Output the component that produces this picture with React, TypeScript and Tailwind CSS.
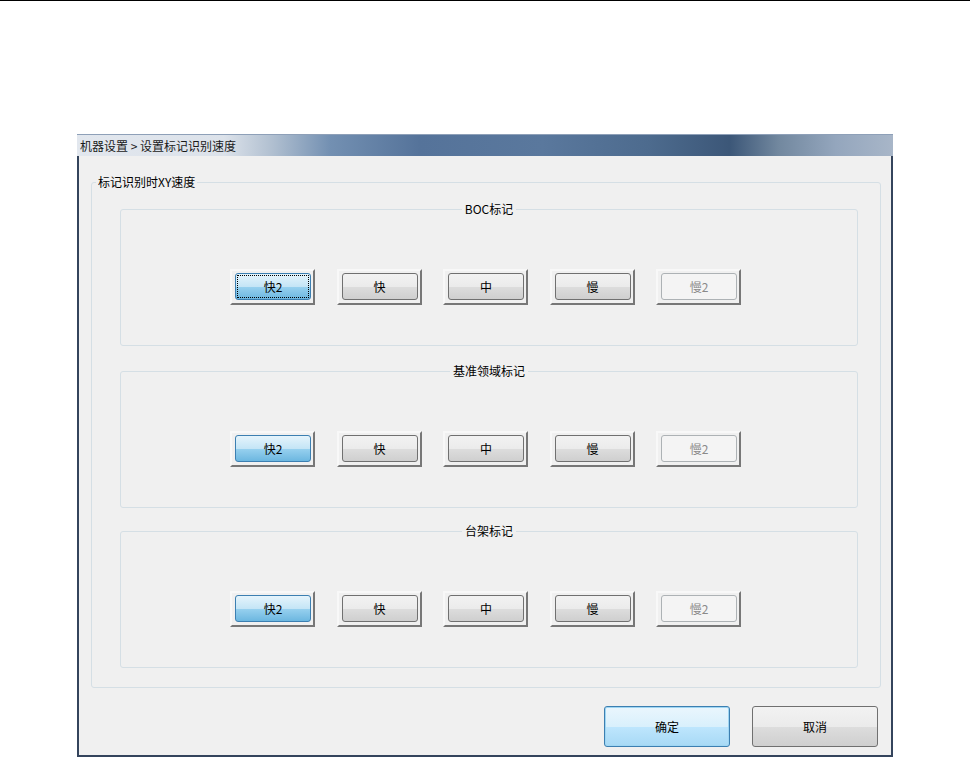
type Kind = "selected" | "focused" | "normal" | "disabled";

const rows: { title: string; focusFirst: boolean; mt: string }[] = [
  { title: "BOC标记", focusFirst: true, mt: "mt-0" },
  { title: "基准领域标记", focusFirst: false, mt: "mt-[18px]" },
  { title: "台架标记", focusFirst: false, mt: "mt-[16px]" },
];

function SpeedButton({ label, kind }: { label: string; kind: Kind }) {
  const face =
    kind === "selected" || kind === "focused"
      ? "border-[#3c7fb1] bg-[linear-gradient(180deg,#e5f4fc_0%,#c4e5f6_50%,#98d1ef_51%,#6cb7e0_100%)] text-black"
      : kind === "disabled"
        ? "border-[#adb2b5] bg-[#f4f4f4] text-[#8a8a8a]"
        : "border-[#707070] bg-[linear-gradient(180deg,#f2f2f2_0%,#ebebeb_50%,#dddddd_51%,#cfcfcf_100%)] text-black";

  return (
    <div className="w-[85px] h-[36px] border-2 border-t-[#f8f8f8] border-l-[#f8f8f8] border-r-[#777777] border-b-[#777777] bg-[#f0f0f0] pl-[3px] pt-[2px] pr-[2px] pb-[3px]">
      <div className={`relative w-full h-full rounded-[3px] border flex items-center justify-center text-[12px] ${face}`}>
        {kind === "focused" && (
          <div className="absolute inset-[1px] border border-dotted border-black" />
        )}
        <span className="relative">{label}</span>
      </div>
    </div>
  );
}

function SpeedGroup({ title, focusFirst, mt }: { title: string; focusFirst: boolean; mt: string }) {
  const items: { label: string; kind: Kind }[] = [
    { label: "快2", kind: focusFirst ? "focused" : "selected" },
    { label: "快", kind: "normal" },
    { label: "中", kind: "normal" },
    { label: "慢", kind: "normal" },
    { label: "慢2", kind: "disabled" },
  ];
  return (
    <fieldset className={`${mt} w-[738px] h-[144px] border border-[#d5dfe5] rounded-[3px]`}>
      <legend className="mx-auto px-[3px] text-[12px] leading-[14px]">{title}</legend>
      <div className="flex gap-[21.5px] pl-[109px] pt-[53px]">
        {items.map((b) => (
          <SpeedButton key={b.label} label={b.label} kind={b.kind} />
        ))}
      </div>
    </fieldset>
  );
}

export default function App() {
  return (
    <div className="w-[970px] h-[758px] bg-white overflow-hidden font-['Noto_Sans_CJK_SC','Noto_Sans',sans-serif] text-black">
      <div className="h-[1px] bg-black" />

      <div className="ml-[77px] mt-[133px] w-[816px]">
        <div className="h-[22px] flex items-center pl-[3px] text-[12px] text-[#1a1a1a] bg-[linear-gradient(90deg,#e2e7ee_0%,#dce2ea_18%,#b0bfd0_24%,#7390b2_31%,#55739a_42%,#5a789d_57%,#4d6b8e_70%,#3c5778_80%,#72889f_86%,#94a6bd_93%,#a8b6c8_100%)] border-t border-[#8ea0b8]">
          机器设置 &gt; 设置标记识别速度
        </div>

        <div className="h-[601px] border-2 border-t-0 border-[#34445c] bg-[#f0f0f0] flex flex-col">
          <fieldset className="mt-[19px] ml-[12px] w-[790px] border border-[#d5dfe5] rounded-[3px]">
            <legend className="ml-[4px] px-[2px] text-[12px] leading-[14px]">标记识别时XY速度</legend>
            <div className="pl-[28px] pt-[13px] pb-[19px]">
              {rows.map((r) => (
                <SpeedGroup key={r.title} title={r.title} focusFirst={r.focusFirst} mt={r.mt} />
              ))}
            </div>
          </fieldset>

          <div className="flex justify-end gap-[22px] pr-[13px] mt-[18px]">
            <button className="w-[126px] h-[41px] rounded-[3px] border border-[#3c7fb1] bg-[linear-gradient(180deg,#eaf6fd_0%,#d9f0fc_50%,#bee6fd_51%,#a7d9f5_100%)] text-[12px] shadow-[inset_0_0_0_1px_#9fd6f3]">
              确定
            </button>
            <button className="w-[126px] h-[41px] rounded-[3px] border border-[#707070] bg-[linear-gradient(180deg,#f2f2f2_0%,#ebebeb_50%,#dddddd_51%,#cfcfcf_100%)] text-[12px]">
              取消
            </button>
          </div>
        </div>
      </div>
    </div>
  );
}
